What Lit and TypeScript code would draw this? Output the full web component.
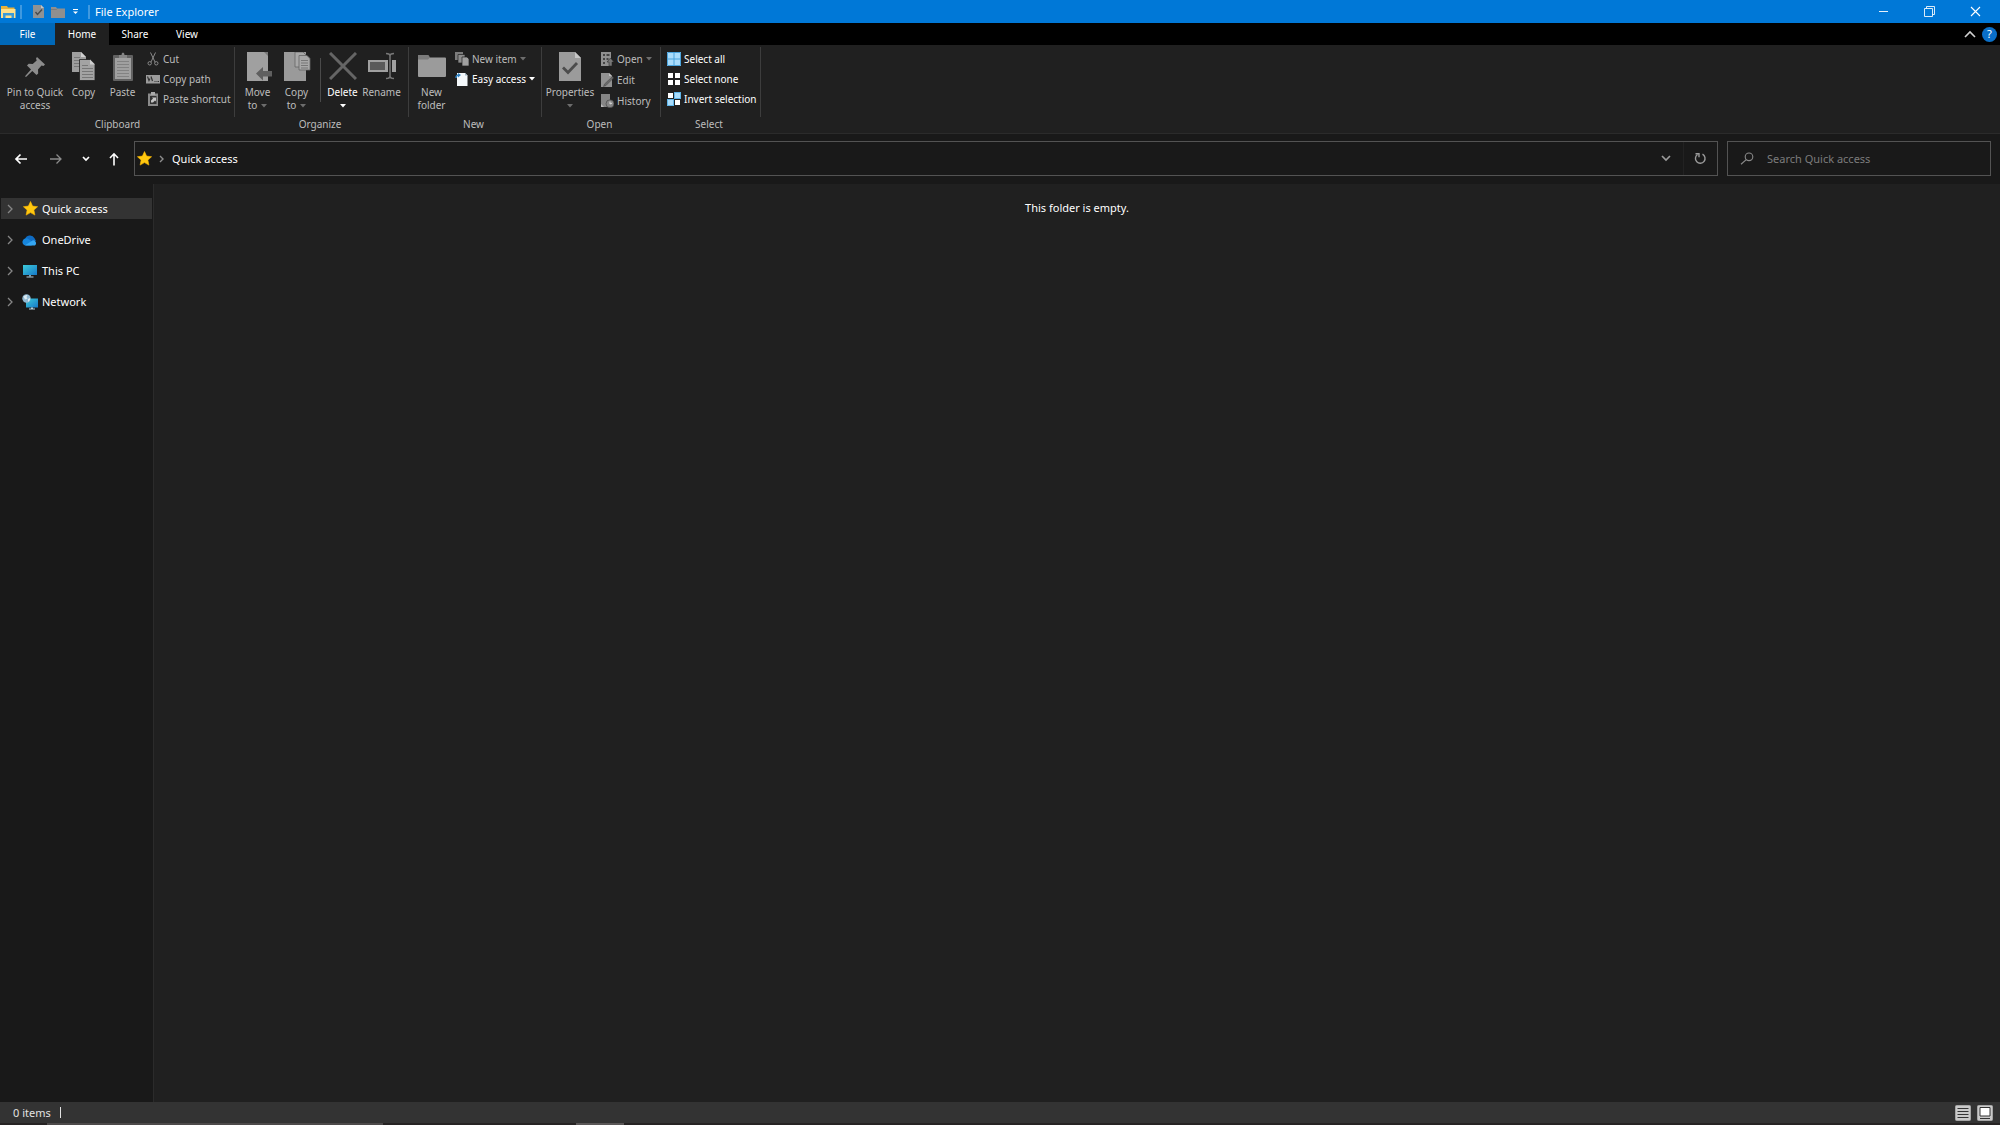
import { LitElement, html, css, svg, TemplateResult } from "lit";
import { customElement, property } from "lit/decorators.js";

const icon = (w: number, h: number, body: TemplateResult) =>
  html`<svg width=${w} height=${h} viewBox="0 0 ${w} ${h}" aria-hidden="true">${body}</svg>`;

const star = svg`<path d="M7.5 .5 9.6 5.1 14.6 5.7 10.9 9.1 11.9 14.1 7.5 11.6 3.1 14.1 4.1 9.1 .4 5.7 5.4 5.1z" fill="#ffc80f" stroke="#ffb900" stroke-width=".6"/>`;

const monitor = svg`<defs><linearGradient id="scr" x1="0" y1="0" x2="1" y2="1"><stop offset="0" stop-color="#3ccbd9"/><stop offset="1" stop-color="#1678c8"/></linearGradient></defs>`;

const icons = {
  explorer: icon(15, 14, svg`<path d="M0 1h6l1 1.500h6.500v9.500H0z" fill="#e8b23c"/><path d="M0 4h14.500v9H0z" fill="#ffe08a"/><path d="M2 13V8h11v5h-2.500v-2.500h-6V13z" fill="#3a9bd8"/>`),
  docCheckSmall: icon(11, 13, svg`<path d="M0 0h8l3 3v10H0z" fill="#8f9294"/><path d="M8 0v3h3z" fill="#c3c6c8"/><path d="M2.500 7l2 2.500 4.500-5" fill="none" stroke="#4a4c4e" stroke-width="1.400"/>`),
  folderSmall: icon(14, 12, svg`<path d="M0 1h5l1 1.500h8V12H0z" fill="#8f8f8f"/><path d="M0 3.500h5.500l1-1" fill="none" stroke="#777" stroke-width=".8"/>`),
  customize: icon(7, 7, svg`<path d="M1 1.500h5" stroke="#fff"/><path d="M1 3.500h5L3.500 6z" fill="#fff"/>`),
  minimize: icon(11, 11, svg`<path d="M1 5.500h9" stroke="#fff" opacity=".9"/>`),
  restore: icon(11, 11, svg`<path d="M.5 2.500h8v8h-8zM2.500 2.500v-2h8v8h-2" fill="none" stroke="#fff" opacity=".85"/>`),
  close: icon(11, 11, svg`<path d="M1 1l9 9M10 1l-9 9" stroke="#fff" stroke-width="1.100" fill="none"/>`),
  collapse: icon(12, 8, svg`<path d="M1 7l5-5 5 5" fill="none" stroke="#d0d0d0" stroke-width="1.600"/>`),
  pin: icon(22, 28, svg`<path d="M13 5l8 7.500-1.500 1.500-2-.5-3.500 4 .2 4-1.700 1.500-4.200-4L2 25l-1-.800 6-6.700-4-4 1.700-1.700 4 .2 4-3.600-.7-2z" fill="#8c8c8c"/>`),
  copy: icon(25, 29, svg`<path d="M1 0h9l5 5v15H1z" fill="#9e9e9e"/><path d="M10 0v5h5z" fill="#cfcfcf"/><path d="M3 5.500h6M3 8.500h9M3 11.500h9M3 14.500h9" stroke="#777"/><path d="M8.500 7.500h10.500l5 5v16h-15.500z" fill="#a3a3a3" stroke="#202020" stroke-width=".8"/><path d="M19 7.500v5h5z" fill="#cfcfcf"/><path d="M11 13.500h6M11 16.500h11M11 19.500h11M11 22.500h11M11 25.500h11" stroke="#777"/>`),
  paste: icon(22, 29, svg`<rect x="1" y="3" width="20" height="26" rx="1" fill="#626262"/><path d="M3 6h16v21H3z" fill="#a0a0a0"/><path d="M7 6V3h2.500a1.500 2.500 0 0 1 3 0H15v3z" fill="#858585"/><path d="M5 9.500h12M5 12.500h12M5 15.500h12M5 18.500h12M5 21.500h12M5 24.500h12" stroke="#828282"/>`),
  cut: icon(14, 14, svg`<path d="M4.500 .5l4.500 9.500M9.500 .5L5 10" stroke="#8a8a8a" fill="none"/><circle cx="3.700" cy="11.300" r="1.700" fill="none" stroke="#8a8a8a"/><circle cx="10.300" cy="11.300" r="1.700" fill="none" stroke="#8a8a8a"/>`),
  path: icon(14, 14, svg`<path d="M0 3h14v8.500H0z" fill="#9c9c9c"/><path d="M1.500 4.500l1.500 4 1-2M5 4.500L6.500 9M8.500 9.500h1M10.500 9.500h1M12 9.500h1" stroke="#333" stroke-width="1.200" fill="none"/>`),
  shortcut: icon(14, 14, svg`<rect x="2" y="1.500" width="10" height="12.500" fill="#8b8b8b"/><path d="M5 0h4v3H5z" fill="#aaa"/><path d="M4 4h6.500v8H4z" fill="#333"/><path d="M5 10.500V8.500l2-2L6 5.500h4v4l-1-1-2 2z" fill="#c4c4c4"/>`),
  move: icon(28, 29, svg`<path d="M3 0h21v29H3z" fill="#a0a0a0"/><path d="M20 0h4v4z" fill="#777"/><path d="M12 21.500l7-6.500v4h9v5.500h-9v4z" fill="#5f5f5f"/>`),
  copyTo: icon(28, 29, svg`<path d="M1 0h22v29H1z" fill="#9a9a9a"/><path d="M12 0h8l3 3v12H12z" fill="#a8a8a8" stroke="#666" stroke-width=".8"/><path d="M16 3.500h8l3 3V18H16z" fill="#a8a8a8" stroke="#666" stroke-width=".8"/><path d="M18 8.500h7M18 11h7M18 13.500h7M18 16h7" stroke="#777"/>`),
  remove: icon(28, 28, svg`<path d="M1 1l26 26M27 1L1 27" stroke="#656565" stroke-width="3" fill="none"/>`),
  rename: icon(28, 28, svg`<path d="M0 8h28v12H0z" fill="#a0a0a0"/><path d="M2 10h15v8H2z" fill="#5a5a5a"/><path d="M22 3v22" stroke="#202020" stroke-width="4"/><path d="M18 1.500q4 0 4 2.500v20q0 2.500-4 2.500M26 1.500q-4 0-4 2.500v20q0 2.500 4 2.500" fill="none" stroke="#777" stroke-width="1.500"/>`),
  folder: icon(30, 28, svg`<path d="M1 4q0-1 1-1h8l2 2.500h16q1 0 1 1V24q0 1-1 1H2q-1 0-1-1z" fill="#9b9b9b"/><path d="M1 7.500h10l2-2-1.500-2.500H2q-1 0-1 1z" fill="#7b7b7b"/>`),
  newItem: icon(14, 14, svg`<path d="M0 0h8v8H0z" fill="#7c7c7c"/><path d="M3 2.500h7v8.500H3z" fill="#8c8c8c" stroke="#202020" stroke-width=".7"/><path d="M7 5H12l2 2V14H7z" fill="#a0a0a0" stroke="#202020" stroke-width=".7"/>`),
  easy: icon(14, 14, svg`<path d="M2 1h8l2.500 2.500V14H2z" fill="#f4f8fb"/><path d="M10 1v2.500h2.500z" fill="#9fb6c6"/><path d="M1 6q0-3 3-3" fill="none" stroke="#2d7fc0" stroke-width="1.500"/><path d="M3 1l3 2-3 2.500z" fill="#2d7fc0"/>`),
  properties: icon(24, 29, svg`<path d="M1 0h16l6 6v23H1z" fill="#9b9b9b"/><path d="M17 0v6h6z" fill="#c6c6c6"/><path d="M5 15.500l5 5L19 11" fill="none" stroke="#4c4c4c" stroke-width="2.800"/>`),
  open: icon(14, 14, svg`<path d="M1 0h10v14H1z" fill="#909090"/><path d="M3 2h2v2H3zM6.500 2h3v2h-3zM3 6h2v2H3zM6.500 6h2v2h-2zM3 10h2v2H3z" fill="#444"/><path d="M10.500 6l3.500 4h-2v4H9v-4H7z" fill="#777" stroke="#202020" stroke-width=".5"/>`),
  edit: icon(14, 14, svg`<path d="M1 0h8l3 3v11H1z" fill="#929292"/><path d="M9 0v3h3z" fill="#c0c0c0"/><path d="M12.500 3.500L4.500 11l-1 2.500 2.500-1L13.500 5z" fill="#6a6a6a" stroke="#444" stroke-width=".5"/>`),
  history: icon(14, 14, svg`<path d="M1 0h9v13H1z" fill="#868686"/><path d="M1 10l3 3H1z" fill="#bbb"/><circle cx="10" cy="9.800" r="4" fill="#858585" stroke="#3b3b3b" stroke-width=".6"/><path d="M10 7.500v2.500l2.200-1" stroke="#ddd" fill="none"/>`),
  all: icon(14, 14, svg`<path d="M0 0h14v14H0z" fill="#a9dcfb"/><path d="M.5 .5h13v13H.5zM7 0v14M0 7h14" fill="none" stroke="#4aa3dc"/>`),
  none: icon(14, 14, svg`<path d="M1 1h5v5H1zM8 1h5v5H8zM1 8h5v5H1zM8 8h5v5H8z" fill="#fff"/>`),
  invert: icon(14, 14, svg`<path d="M7 0h7v7H7zM0 7h7v7H0z" fill="#5fb4e8"/><path d="M8 1h5v5H8zM1 8h5v5H1z" fill="#a9dcfb"/><path d="M1 1h5v5H1zM8 8h5v5H8z" fill="#fff"/>`),
  drop: icon(6, 4, svg`<path d="M0 0h6L3 3.500z" fill="currentColor"/>`),
  back: icon(14, 14, svg`<path d="M13 7H2M6.500 2.500L2 7l4.500 4.500" fill="none" stroke="#fff" stroke-width="1.700"/>`),
  forward: icon(14, 14, svg`<path d="M1 7h11M7.500 2.500L12 7l-4.500 4.500" fill="none" stroke="#8b8b8b" stroke-width="1.300"/>`),
  recent: icon(8, 6, svg`<path d="M1 1l3 3 3-3" fill="none" stroke="#fff" stroke-width="1.700"/>`),
  up: icon(12, 14, svg`<path d="M6 13.500V2M2 6l4-4.200L10 6" fill="none" stroke="#fff" stroke-width="1.600"/>`),
  star: icon(15, 15, star),
  crumb: icon(6, 8, svg`<path d="M1 1l3 3-3 3" fill="none" stroke="#8d8d8d" stroke-width="1.400"/>`),
  down: icon(10, 7, svg`<path d="M1 1l4 4 4-4" fill="none" stroke="#9b9b9b" stroke-width="1.700"/>`),
  refresh: icon(13, 13, svg`<path d="M8.500 2.200a4.800 4.800 0 1 1-5 .3" fill="none" stroke="#9b9b9b" stroke-width="1.400"/><path d="M1.500 1.700h3.500v3.500" fill="none" stroke="#9b9b9b" stroke-width="1.400"/>`),
  search: icon(14, 13, svg`<circle cx="9" cy="4.800" r="3.800" fill="none" stroke="#8b8b8b" stroke-width="1.100"/><path d="M6.300 7.600L1 12.300" stroke="#8b8b8b" stroke-width="1.200"/>`),
  chevron: icon(6, 10, svg`<path d="M1 1l4 4-4 4" fill="none" stroke="#868686" stroke-width="1.300"/>`),
  cloud: icon(16, 12, svg`<path d="M3 5.500a5 4.800 0 0 1 9.500-1.200L14 7 4 9z" fill="#0f6cc4"/><path d="M4 11.500A3.600 3.600 0 1 1 5.500 4.600l6 3.900-2 3z" fill="#1685dc"/><path d="M3 11.300L11 6.200a3 3 0 0 1 2 5.300H4z" fill="#34a6f2"/>`),
  pc: icon(16, 14, svg`${monitor}<path d="M1 1h14v10H1z" fill="url(#scr)"/><path d="M7 11h2v1.500H7z" fill="#7d9db0"/><path d="M4.500 12.500h7v1h-7z" fill="#b5cfdd"/>`),
  network: icon(16, 16, svg`${monitor}<path d="M4 4.500h12v9H4z" fill="url(#scr)"/><path d="M9 13.500h2v1H9zM7 14.500h6v1H7z" fill="#b5cfdd"/><circle cx="4.500" cy="4.500" r="4.200" fill="#91b9d3"/><path d="M1.500 2.500q2-2 4-1.500L4.500 3l1 1.500-2.500 1zM6 5l2-1v2L6 8z" fill="#dceaf2"/>`),
  list: icon(16, 16, svg`<rect x=".5" y=".5" width="15" height="15" rx="1" fill="#c9c9c9" stroke="#a5a5a5"/><path d="M2.500 3.500h11M2.500 6.500h11M2.500 9.500h11M2.500 12.500h11" stroke="#333"/>`),
  large: icon(16, 16, svg`<rect x=".5" y=".5" width="15" height="15" rx="1" fill="#c9c9c9" stroke="#a5a5a5"/><path d="M3 2.500h10v8.500H3z" fill="#fff" stroke="#333"/><path d="M3 13.500h10" stroke="#333"/>`),
};

type IconName = keyof typeof icons;

const reset = css`
  :host {
    display: block;
    font-family: "Noto Sans", "Open Sans", sans-serif;
  }
  * {
    box-sizing: border-box;
  }
  svg {
    display: block;
    flex: none;
  }
  button {
    display: flex;
    align-items: center;
    margin: 0;
    padding: 0;
    border: 0;
    background: none;
    color: inherit;
    font: inherit;
    white-space: nowrap;
  }
`;

@customElement("ribbon-big")
export class RibbonBig extends LitElement {
  @property() icon: IconName = "copy";
  @property() first = "";
  @property() second = "";
  @property({ type: Boolean }) drop = false;
  @property({ type: Boolean }) active = false;

  static styles = [
    reset,
    css`
      button {
        flex-direction: column;
        width: 100%;
        color: #bdbdbd;
        line-height: 13px;
      }
      .active {
        color: #fff;
      }
      .picture {
        display: flex;
        height: 34px;
      }
      .second {
        display: flex;
        align-items: center;
        gap: 4px;
        min-height: 13px;
      }
      .drop {
        color: #6d6d6d;
      }
      .active .drop {
        color: #fff;
      }
    `,
  ];

  render() {
    return html`<button class=${this.active ? "active" : ""}>
      <span class="picture">${icons[this.icon]}</span>
      <span>${this.first}</span>
      <span class="second">${this.second}${this.drop ? html`<span class="drop">${icons.drop}</span>` : ""}</span>
    </button>`;
  }
}

@customElement("ribbon-small")
export class RibbonSmall extends LitElement {
  @property() icon: IconName = "cut";
  @property() label = "";
  @property({ type: Boolean }) drop = false;
  @property({ type: Boolean }) active = false;

  static styles = [
    reset,
    css`
      button {
        gap: 3px;
        height: 14px;
        line-height: 14px;
        color: #bdbdbd;
      }
      .active {
        color: #fff;
      }
      .drop {
        color: #6d6d6d;
      }
      .active .drop {
        color: #fff;
      }
    `,
  ];

  render() {
    return html`<button class=${this.active ? "active" : ""}>
      ${icons[this.icon]}<span>${this.label}</span>${this.drop ? html`<span class="drop">${icons.drop}</span>` : ""}
    </button>`;
  }
}

@customElement("app-root")
export class AppRoot extends LitElement {
  static styles = [
    reset,
    css`
      :host {
        display: flex;
        flex-direction: column;
        min-height: 100vh;
        background: #202020;
        color: #fff;
        font-size: 11px;
        line-height: 16px;
      }
      .title {
        display: flex;
        align-items: center;
        height: 23px;
        padding: 0 2px 0 1px;
        background: #0078d7;
      }
      .tick {
        width: 2px;
        height: 14px;
        border: 1px solid #3f99e0;
      }
      .quick {
        display: flex;
        align-items: center;
        gap: 7px;
        padding: 0 9px 0 11px;
      }
      .title h1 {
        margin: 0 auto 0 5px;
        font-size: 11px;
        font-weight: 400;
      }
      .title .tick.first {
        margin-left: 4px;
      }
      .window {
        justify-content: center;
        width: 46px;
        height: 23px;
      }
      .tabs {
        display: flex;
        height: 22px;
        padding-right: 3px;
        background: #000;
        font-size: 10px;
      }
      .tab {
        justify-content: center;
        width: 52px;
      }
      .file {
        width: 55px;
        background: #0068b8;
      }
      .home {
        width: 54px;
        background: #202020;
      }
      .tools {
        display: flex;
        align-items: center;
        gap: 6px;
        margin-left: auto;
      }
      .help {
        justify-content: center;
        width: 15px;
        height: 15px;
        border-radius: 50%;
        background: #0a6fc8;
        font-size: 11px;
      }
      .ribbon {
        display: flex;
        padding-top: 2px;
        border-bottom: 1px solid #2b2b2b;
        background: #202020;
        font-size: 10px;
        line-height: 13px;
      }
      .group {
        display: flex;
        flex-direction: column;
      }
      .items {
        display: flex;
        height: 70px;
        padding: 5px 3px 0 6px;
        border-right: 1px solid #3d3d3d;
      }
      .group h2 {
        margin: 0;
        padding: 1px 4px 2px 0;
        font-size: 10px;
        font-weight: 400;
        color: #bdbdbd;
        text-align: center;
      }
      .clipboard {
        width: 235px;
      }
      .clipboard h2 {
        padding-right: 0;
      }
      .organize {
        width: 174px;
      }
      .organize .items {
        padding-left: 3px;
      }
      .new {
        width: 133px;
      }
      .new .items {
        padding-left: 3px;
      }
      .opening {
        width: 119px;
      }
      .select {
        width: 100px;
      }
      .wide {
        width: 58px;
      }
      .medium {
        width: 39px;
      }
      .large {
        width: 44px;
      }
      .stack {
        display: flex;
        flex-direction: column;
        gap: 6px;
      }
      .clipboard .stack {
        padding-left: 4px;
      }
      .new .stack {
        padding-left: 4px;
      }
      .opening .stack {
        gap: 7px;
        padding-left: 8px;
      }
      .rule {
        width: 1px;
        height: 44px;
        margin: 6px 2px 0 4px;
        background: #4a4a4a;
      }
      .address {
        display: flex;
        align-items: center;
        padding: 7px 9px 8px 0;
        background: #191919;
      }
      .history {
        display: flex;
        width: 134px;
        padding-left: 3px;
      }
      .history button {
        justify-content: center;
        width: 35px;
      }
      .history .narrow {
        width: 26px;
      }
      .history .up {
        width: 29px;
      }
      .path {
        display: flex;
        flex: 1;
        align-items: center;
        height: 35px;
        padding-left: 2px;
        border: 1px solid #535353;
      }
      .crumb {
        padding-left: 7px;
      }
      .path .sep {
        padding-left: 7px;
      }
      .path .drop {
        justify-content: center;
        width: 34px;
        height: 33px;
        margin-left: auto;
      }
      .path .refresh {
        justify-content: center;
        width: 34px;
        height: 33px;
        border-left: 1px solid #222;
      }
      .search {
        display: flex;
        align-items: center;
        gap: 13px;
        width: 264px;
        height: 35px;
        margin-left: 9px;
        padding-left: 12px;
        border: 1px solid #535353;
      }
      .search input {
        flex: 1;
        min-width: 0;
        padding: 0;
        border: 0;
        outline: 0;
        background: none;
        color: #fff;
        font: inherit;
      }
      .search input::placeholder {
        color: #7c7c7c;
        opacity: 1;
      }
      .body {
        display: flex;
        flex: 1;
      }
      .tree {
        display: flex;
        flex-direction: column;
        gap: 10px;
        width: 154px;
        padding: 14px 1px 0;
        border-right: 1px solid #2b2b2b;
        background: #191919;
      }
      .node {
        height: 21px;
        padding-left: 6px;
      }
      .node .glyph {
        display: flex;
        justify-content: center;
        width: 16px;
        margin: 0 4px 0 9px;
      }
      .node.current {
        background: #333;
      }
      .files {
        flex: 1;
        padding-top: 16px;
        text-align: center;
      }
      .files p {
        margin: 0;
      }
      .status {
        display: flex;
        align-items: center;
        gap: 6px;
        height: 21px;
        padding: 0 7px 0 13px;
        background: #333;
        color: #e2e2e2;
      }
      .caret {
        width: 1px;
        height: 11px;
        margin: 0 auto 0 3px;
        background: #e2e2e2;
      }
      .edge {
        display: flex;
        height: 2px;
        padding-left: 47px;
        gap: 193px;
        background: #262323;
      }
      .edge i {
        width: 336px;
        background: #4d4a4a;
      }
      .edge i:last-child {
        width: 48px;
        background: #5a5757;
      }
    `,
  ];

  private node(name: IconName, label: string, current = false) {
    return html`<button class="node ${current ? "current" : ""}">
      ${icons.chevron}<span class="glyph">${icons[name]}</span><span>${label}</span>
    </button>`;
  }

  render() {
    return html`
      <header class="title">
        ${icons.explorer}
        <span class="tick first"></span>
        <span class="quick">
          <button aria-label="Properties">${icons.docCheckSmall}</button>
          <button aria-label="New folder">${icons.folderSmall}</button>
          <button aria-label="Customize toolbar">${icons.customize}</button>
        </span>
        <span class="tick"></span>
        <h1>File Explorer</h1>
        <button class="window" aria-label="Minimize">${icons.minimize}</button>
        <button class="window" aria-label="Restore">${icons.restore}</button>
        <button class="window" aria-label="Close">${icons.close}</button>
      </header>
      <nav class="tabs">
        <button class="tab file">File</button>
        <button class="tab home">Home</button>
        <button class="tab">Share</button>
        <button class="tab">View</button>
        <span class="tools">
          <button aria-label="Collapse ribbon">${icons.collapse}</button>
          <button class="help" aria-label="Help">?</button>
        </span>
      </nav>
      <section class="ribbon">
        <div class="group clipboard">
          <div class="items">
            <ribbon-big class="wide" icon="pin" first="Pin to Quick" second="access"></ribbon-big>
            <ribbon-big class="medium" icon="copy" first="Copy"></ribbon-big>
            <ribbon-big class="medium" icon="paste" first="Paste"></ribbon-big>
            <div class="stack">
              <ribbon-small icon="cut" label="Cut"></ribbon-small>
              <ribbon-small icon="path" label="Copy path"></ribbon-small>
              <ribbon-small icon="shortcut" label="Paste shortcut"></ribbon-small>
            </div>
          </div>
          <h2>Clipboard</h2>
        </div>
        <div class="group organize">
          <div class="items">
            <ribbon-big class="medium" icon="move" first="Move" second="to" drop></ribbon-big>
            <ribbon-big class="medium" icon="copyTo" first="Copy" second="to" drop></ribbon-big>
            <span class="rule"></span>
            <ribbon-big class="medium" icon="remove" first="Delete" drop active></ribbon-big>
            <ribbon-big class="medium" icon="rename" first="Rename"></ribbon-big>
          </div>
          <h2>Organize</h2>
        </div>
        <div class="group new">
          <div class="items">
            <ribbon-big class="medium" icon="folder" first="New" second="folder"></ribbon-big>
            <div class="stack">
              <ribbon-small icon="newItem" label="New item" drop></ribbon-small>
              <ribbon-small icon="easy" label="Easy access" drop active></ribbon-small>
            </div>
          </div>
          <h2>New</h2>
        </div>
        <div class="group opening">
          <div class="items">
            <ribbon-big class="large" icon="properties" first="Properties" drop></ribbon-big>
            <div class="stack">
              <ribbon-small icon="open" label="Open" drop></ribbon-small>
              <ribbon-small icon="edit" label="Edit"></ribbon-small>
              <ribbon-small icon="history" label="History"></ribbon-small>
            </div>
          </div>
          <h2>Open</h2>
        </div>
        <div class="group select">
          <div class="items">
            <div class="stack">
              <ribbon-small icon="all" label="Select all" active></ribbon-small>
              <ribbon-small icon="none" label="Select none" active></ribbon-small>
              <ribbon-small icon="invert" label="Invert selection" active></ribbon-small>
            </div>
          </div>
          <h2>Select</h2>
        </div>
      </section>
      <section class="address">
        <div class="history">
          <button aria-label="Back">${icons.back}</button>
          <button aria-label="Forward">${icons.forward}</button>
          <button class="narrow" aria-label="Recent locations">${icons.recent}</button>
          <button class="up" aria-label="Up">${icons.up}</button>
        </div>
        <div class="path">
          ${icons.star}
          <span class="sep">${icons.crumb}</span>
          <button class="crumb">Quick access</button>
          <button class="drop" aria-label="Previous locations">${icons.down}</button>
          <button class="refresh" aria-label="Refresh">${icons.refresh}</button>
        </div>
        <label class="search">
          ${icons.search}
          <input type="search" aria-label="Search Quick access" placeholder="Search Quick access" />
        </label>
      </section>
      <div class="body">
        <nav class="tree">
          ${this.node("star", "Quick access", true)} ${this.node("cloud", "OneDrive")}
          ${this.node("pc", "This PC")} ${this.node("network", "Network")}
        </nav>
        <main class="files"><p>This folder is empty.</p></main>
      </div>
      <footer class="status">
        <span>0 items</span><span class="caret"></span>
        <button aria-label="Details view">${icons.list}</button>
        <button aria-label="Large icons view">${icons.large}</button>
      </footer>
      <div class="edge"><i></i><i></i></div>
    `;
  }
}
